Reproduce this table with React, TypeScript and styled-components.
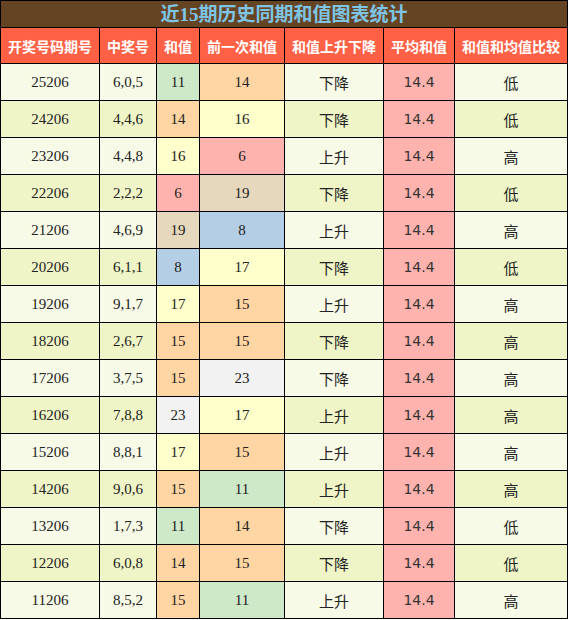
import React from 'react'
import styled, { createGlobalStyle } from 'styled-components'

const GlobalStyle = createGlobalStyle`
  body {
    margin: 0;
    background: #fff;
    font-family: 'Liberation Serif', 'Noto Sans CJK SC', serif;
  }
`

const Wrap = styled.div`
  width: 568px;
`

const Title = styled.div`
  height: 26px;
  background: #654424;
  border: 1px solid #000;
  border-bottom: none;
  color: #7ec4e4;
  font-family: 'Liberation Serif', 'Noto Sans CJK SC', serif;
  font-weight: bold;
  font-size: 19px;
  line-height: 27px;
  text-align: center;
`

const Table = styled.table`
  width: 568px;
  border-collapse: collapse;
  table-layout: fixed;
`

const Th = styled.th`
  height: 35px;
  padding: 0;
  border: 1px solid #000;
  background: #ff6146;
  color: #fff;
  font-family: 'Noto Sans CJK SC', sans-serif;
  font-weight: bold;
  font-size: 14px;
  text-align: center;
`

const Td = styled.td<{ $bg: string; $sans?: boolean }>`
  height: 36px;
  padding: 0;
  border: 1px solid #000;
  background: ${(p) => p.$bg};
  color: #222;
  font-family: ${(p) =>
    p.$sans ? "'Noto Sans CJK SC', sans-serif" : "'Liberation Serif', 'Noto Sans CJK SC', serif"};
  font-size: 15px;
  text-align: center;
`

const Avg = styled(Td)`
  font-family: 'DejaVu Sans', sans-serif;
  font-size: 14px;
  color: #333;
`

const widths = [99, 57, 43, 85, 99, 71, 113]
const heads = ['开奖号码期号', '中奖号', '和值', '前一次和值', '和值上升下降', '平均和值', '和值和均值比较']

const rows: [string, string, number, number, string, string][] = [
  ['25206', '6,0,5', 11, 14, '下降', '低'],
  ['24206', '4,4,6', 14, 16, '下降', '低'],
  ['23206', '4,4,8', 16, 6, '上升', '高'],
  ['22206', '2,2,2', 6, 19, '下降', '低'],
  ['21206', '4,6,9', 19, 8, '上升', '高'],
  ['20206', '6,1,1', 8, 17, '下降', '低'],
  ['19206', '9,1,7', 17, 15, '上升', '高'],
  ['18206', '2,6,7', 15, 15, '下降', '高'],
  ['17206', '3,7,5', 15, 23, '下降', '高'],
  ['16206', '7,8,8', 23, 17, '上升', '高'],
  ['15206', '8,8,1', 17, 15, '上升', '高'],
  ['14206', '9,0,6', 15, 11, '上升', '高'],
  ['13206', '1,7,3', 11, 14, '下降', '低'],
  ['12206', '6,0,8', 14, 15, '下降', '低'],
  ['11206', '8,5,2', 15, 11, '上升', '高'],
]

const sumColor = (v: number) => {
  switch (v) {
    case 11: return '#cde9c7'
    case 14:
    case 15: return '#ffd6a3'
    case 16:
    case 17: return '#ffffcc'
    case 6: return '#ffb3ae'
    case 19: return '#e6d8bd'
    case 8: return '#b4cfe5'
    case 23: return '#f2f2f2'
    default: return '#fff'
  }
}

export default function App() {
  return (
    <Wrap>
      <GlobalStyle />
      <Title>近15期历史同期和值图表统计</Title>
      <Table>
        <colgroup>
          {widths.map((w, i) => (
            <col key={i} style={{ width: w }} />
          ))}
        </colgroup>
        <thead>
          <tr>
            {heads.map((h) => (
              <Th key={h}>{h}</Th>
            ))}
          </tr>
        </thead>
        <tbody>
          {rows.map((r, i) => {
            const bg = i % 2 === 0 ? '#f8fae8' : '#eff5c6'
            return (
              <tr key={r[0]}>
                <Td $bg={bg}>{r[0]}</Td>
                <Td $bg={bg}>{r[1]}</Td>
                <Td $bg={sumColor(r[2])}>{r[2]}</Td>
                <Td $bg={sumColor(r[3])}>{r[3]}</Td>
                <Td $bg={bg} $sans>{r[4]}</Td>
                <Avg $bg="#ffb3ae">14.4</Avg>
                <Td $bg={bg} $sans>{r[5]}</Td>
              </tr>
            )
          })}
        </tbody>
      </Table>
    </Wrap>
  )
}
